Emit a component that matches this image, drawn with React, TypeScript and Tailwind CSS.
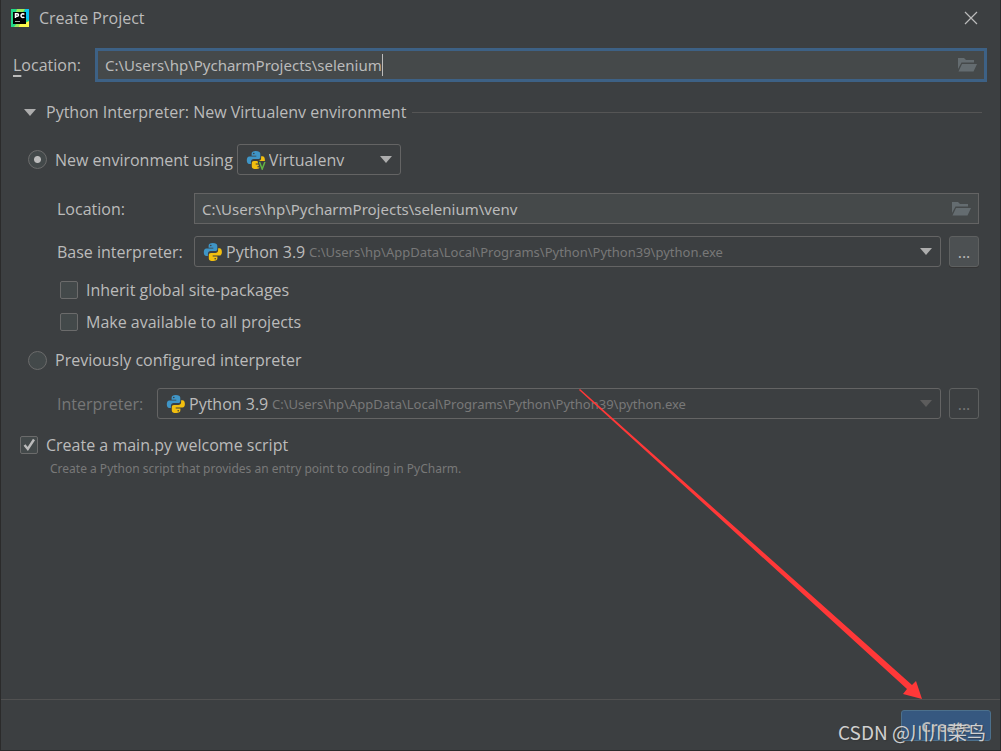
import type { ReactNode } from 'react';

const PythonIcon = ({ venv = false }: { venv?: boolean }) => (
    <svg viewBox="0 0 20 20" className="h-5 w-5 shrink-0" aria-hidden="true">
        <path
            fill="#3f95c6"
            d="M9.800 1C7 1 5.600 2 5.600 3.800v1.900h4.700v.8H3.400C1.700 6.500.8 8 .8 10.200c0 2.300.9 3.700 2.600 3.700h1.500v-2c0-1.700 1.200-2.800 2.800-2.800h4.500c1.300 0 2.100-.9 2.100-2.200V3.800C14.300 2 12.500 1 9.800 1z"
        />
        <path
            fill="#f2bf0f"
            d="M15.100 6.300v2c0 1.700-1.200 2.800-2.800 2.800H7.900c-1.300 0-2.100.9-2.100 2.200v3.100c0 1.800 1.700 2.700 4.300 2.700 2.800 0 4.300-1 4.300-2.800v-1.900H9.700v-.8h6.700c1.700 0 2.500-1.500 2.500-3.600 0-2.300-.8-3.700-2.500-3.700z"
        />
        <circle cx="7.800" cy="3.500" r=".8" fill="#3c3f41" />
        <circle cx="12.200" cy="16.700" r=".8" fill="#3c3f41" />
        {venv && (
            <>
                <path fill="#3c3f41" d="M11.500 11H20v9h-6z" />
                <path fill="none" stroke="#62b543" strokeWidth="1.500" d="M13.500 12l2.700 7 2.700-7" />
            </>
        )}
    </svg>
);

const PyCharmIcon = () => (
    <svg viewBox="0 0 18 18" className="h-[18px] w-[18px] shrink-0" aria-hidden="true">
        <path fill="#21d789" d="M0 0h18v18H0z" />
        <path fill="#07c3f2" d="M14 0h4v12l-4-3z" />
        <path fill="#fcf84a" d="M18 12v6H7l2-4h5z" />
        <path fill="#9be95c" d="M6 0h8l-2 3H5zM3 18l3-4h3l-1 4z" />
        <path fill="#000" d="M2 3h13v12H2z" />
        <path fill="none" stroke="#fff" strokeWidth="1.500" d="M4.500 9V4.700h1.700a1.200 1.200 0 010 2.600H4.500M13.300 5.400a1.900 1.900 0 10 0 2.600" />
        <path fill="#aaa" d="M4 12h5v1H4z" />
    </svg>
);

const FolderIcon = () => (
    <svg viewBox="0 0 20 16" className="h-4 w-5" aria-hidden="true">
        <path fill="#646c70" d="M1 1h6l2 2h8v2.500H4.500L1 12z" />
        <path fill="#646c70" d="M5 7h15l-3.500 7.500H1.500z" />
    </svg>
);

const Triangle = ({ className }: { className: string }) => (
    <svg viewBox="0 0 12 7" className={`h-[7px] w-3 shrink-0 ${className}`} aria-hidden="true">
        <path fill="currentColor" d="M0 0h12L6 7z" />
    </svg>
);

const comboBox = 'flex h-[31px] items-center rounded-[3px] border border-[#646464] px-2';
const select = 'appearance-none bg-transparent text-[#bbbbbb] outline-none';
const pathText = "font-['Noto_Sans',sans-serif] text-[15px]";

type InterpreterSelectProps = { id: string; arrowClass: string };

const InterpreterSelect = ({ id, arrowClass }: InterpreterSelectProps) => (
    <div className={`${comboBox} min-w-0 flex-1`}>
        <PythonIcon />
        <select id={id} className={`${select} ml-[3px]`}>
            <option>Python 3.9</option>
        </select>
        <span className="ml-[3px] flex-1 truncate font-['Noto_Sans',sans-serif] text-[13px] text-[#787878]">
            C:\Users\hp\AppData\Local\Programs\Python\Python39\python.exe
        </span>
        <Triangle className={arrowClass} />
    </div>
);

type CheckProps = { checked?: boolean; className: string; children: ReactNode };

const Check = ({ checked, className, children }: CheckProps) => (
    <label className={`flex items-center gap-2 ${className}`}>
        <span className="grid h-[18px] w-[18px] shrink-0">
            <input
                type="checkbox"
                defaultChecked={checked}
                className="peer col-start-1 row-start-1 h-[18px] w-[18px] appearance-none rounded-[2px] border border-[#6b6b6b] bg-[#43494a]"
            />
            <svg viewBox="0 0 18 18" className="pointer-events-none invisible col-start-1 row-start-1 peer-checked:visible">
                <path fill="none" stroke="#bbbbbb" strokeWidth="2.400" d="M4.500 9l3.300 4L14 3.500" />
            </svg>
        </span>
        {children}
    </label>
);

const radio =
    'h-[19px] w-[19px] shrink-0 appearance-none rounded-full border border-[#6b6b6b] bg-[#43494a] checked:bg-[radial-gradient(circle,#bbbbbb_3px,#43494a_4px)]';

export default function App() {
    return (
        <div className="relative flex min-h-screen flex-col overflow-hidden border-x border-b border-[#2b2b2b] bg-[#3c3f41] font-['Open_Sans','Noto_Sans_CJK_SC',sans-serif] text-base leading-6 text-[#bbbbbb]">
            <header className="flex h-9 items-center gap-[10px] pl-[10px] pr-[22px]">
                <PyCharmIcon />
                <h1 className="flex-1">Create Project</h1>
                <button type="button" aria-label="Close">
                    <svg viewBox="0 0 14 14" className="h-[14px] w-[14px]">
                        <path fill="none" stroke="#bbbbbb" strokeWidth="1.200" d="M1 1l12 12M13 1L1 13" />
                    </svg>
                </button>
            </header>

            <main className="flex-1">
                <div className="mt-3 flex items-center pl-3 pr-[13px]">
                    <label htmlFor="location" className="w-[82px]">
                        <span className="underline decoration-2 underline-offset-4">L</span>ocation:
                    </label>
                    <div className="flex h-[34px] flex-1 items-center border-[3px] border-[#3d6185] bg-[#45494a] px-[7px]">
                        {/* field grows with its text so the caret sits right behind it */}
                        <input
                            id="location"
                            defaultValue="C:\Users\hp\PycharmProjects\selenium"
                            className={`${pathText} h-[22px] field-sizing-content border-r border-[#bbbbbb] bg-transparent outline-none`}
                        />
                        <button type="button" aria-label="Browse" className="ml-auto">
                            <FolderIcon />
                        </button>
                    </div>
                </div>

                <div className="mt-[18px] flex items-center pl-[23px] pr-[18px]">
                    <Triangle className="mr-[10px] text-[#adadad]" />
                    <h2>Python Interpreter: New Virtualenv environment</h2>
                    <div className="ml-[6px] h-px flex-1 bg-[#555555]" />
                </div>

                <div className="mt-5 flex items-center pl-[27px]">
                    <label className="flex items-center gap-2">
                        <input type="radio" name="env" defaultChecked className={radio} />
                        New environment using
                    </label>
                    <div className={`${comboBox} ml-1 w-[164px]`}>
                        <PythonIcon venv />
                        <select aria-label="Environment tool" className={`${select} ml-[3px] flex-1`}>
                            <option>Virtualenv</option>
                        </select>
                        <Triangle className="text-[#adadad]" />
                    </div>
                </div>

                <div className="mt-[18px] flex items-center pl-14 pr-[21px]">
                    <label htmlFor="venv" className="w-[137px]">Location:</label>
                    <div className="flex h-[31px] flex-1 items-center border border-[#646464] bg-[#45494a] px-[7px]">
                        <input
                            id="venv"
                            defaultValue="C:\Users\hp\PycharmProjects\selenium\venv"
                            className={`${pathText} min-w-0 flex-1 bg-transparent outline-none`}
                        />
                        <button type="button" aria-label="Browse">
                            <FolderIcon />
                        </button>
                    </div>
                </div>

                <div className="mt-3 flex items-center pl-14 pr-[21px]">
                    <label htmlFor="base" className="w-[137px]">Base interpreter:</label>
                    <InterpreterSelect id="base" arrowClass="text-[#adadad]" />
                    <button type="button" className="ml-2 h-[31px] w-[30px] rounded-[3px] border border-[#5e6060] bg-[#4c5052] shadow-[0_1px_0_#353535]">
                        ...
                    </button>
                </div>

                <Check className="mt-[11px] pl-[59px]">Inherit global site-packages</Check>
                <Check className="mt-2 pl-[59px]">Make available to all projects</Check>

                <label className="mt-[14px] flex items-center gap-2 pl-[27px]">
                    <input type="radio" name="env" className={radio} />
                    Previously configured interpreter
                </label>

                <div className="mt-4 flex items-center pl-14 pr-[21px]">
                    <label htmlFor="interpreter" className="w-[100px] text-[#777777]">Interpreter:</label>
                    <InterpreterSelect id="interpreter" arrowClass="text-[#5c5c5c]" />
                    <button type="button" disabled className="ml-2 h-[31px] w-[30px] rounded-[3px] border border-[#5e6060] text-[#777777]">
                        ...
                    </button>
                </div>

                <Check checked className="mt-[14px] pl-[19px]">Create a main.py welcome script</Check>
                <p className="pl-[49px] font-['Noto_Sans',sans-serif] text-xs leading-6 text-[#787878]">
                    Create a Python script that provides an entry point to coding in PyCharm.
                </p>
            </main>

            <footer className="flex justify-end border-t border-[#515151] pb-[9px] pr-[9px] pt-[10px]">
                <button type="button" className="h-[31px] w-[90px] rounded-[3px] border border-[#4c708c] bg-[#365880] text-[15px] font-bold text-[#bbbbbb]">
                    Create
                </button>
            </footer>

            <svg viewBox="0 0 343 311" className="pointer-events-none absolute bottom-[50px] right-[78px] h-[311px] w-[343px]" aria-hidden="true">
                <path fill="#ff3838" d="M0 1L1 0L333 296l4-4 6 18-19-5 4-5z" />
            </svg>
            <div className="pointer-events-none absolute bottom-[2px] right-[14px] font-['Noto_Sans_CJK_SC',sans-serif] text-[19px] leading-8 text-[#d0d0d0] [text-shadow:1px_1px_1px_#33333399]">
                CSDN @川川菜鸟
            </div>
        </div>
    );
}
